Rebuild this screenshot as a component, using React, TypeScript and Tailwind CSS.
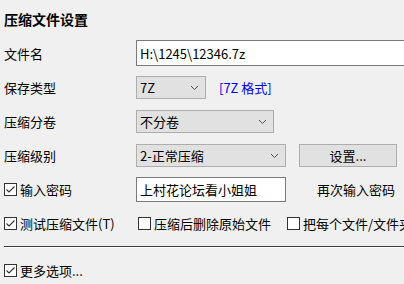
import type { ReactNode } from 'react'

function Chevron() {
  return (
    <svg width="9" height="6" viewBox="0 0 9 6" className="shrink-0">
      <path d="M1 1 L4.5 4.5 L8 1" fill="none" stroke="#505050" strokeWidth="1" />
    </svg>
  )
}

function Check({ checked }: { checked: boolean }) {
  return (
    <span className="w-[13px] h-[13px] shrink-0 border border-[#333] bg-white flex items-center justify-center">
      {checked && (
        <svg width="11" height="11" viewBox="0 0 11 11">
          <path d="M1.5 5.5 L4 8 L9.5 2.5" fill="none" stroke="#333" strokeWidth="1.1" />
        </svg>
      )}
    </span>
  )
}

function CheckLabel({ checked, children, className = '' }: { checked: boolean; children: ReactNode; className?: string }) {
  return (
    <label className={`flex items-center gap-[3px] whitespace-nowrap ${className}`}>
      <Check checked={checked} />
      <span>{children}</span>
    </label>
  )
}

function Select({ value, width }: { value: string; width: string }) {
  return (
    <div className={`h-full ${width} bg-[#e1e1e1] border border-[#adadad] flex items-center justify-between pl-[3px] pr-[6px]`}>
      <span>{value}</span>
      <Chevron />
    </div>
  )
}

function Row({ label, height, children }: { label: ReactNode; height: string; children: ReactNode }) {
  return (
    <div className={`flex items-center ${height}`}>
      <div className="w-[132px] shrink-0 flex items-center">{label}</div>
      {children}
    </div>
  )
}

export default function App() {
  return (
    <div className="w-[404px] h-[284px] overflow-hidden bg-[#f0f0f0] text-black text-[13px] leading-none font-['Noto_Sans_CJK_SC',sans-serif] pl-[4px]">
      <div className="h-[38px] flex items-center font-bold text-[14px]">压缩文件设置</div>

      <div className="mt-[2px]">
        <Row label="文件名" height="h-[26px]">
          <div className="h-full w-[300px] shrink-0 bg-white border border-[#7a7a7a] flex items-center pl-[3px]">
            H:\1245\12346.7z
          </div>
        </Row>
      </div>

      <div className="mt-[10px]">
        <Row label="保存类型" height="h-[23px]">
          <Select value="7Z" width="w-[70px]" />
          <span className="ml-[13px] text-[#0000ff]">[7Z 格式]</span>
        </Row>
      </div>

      <div className="mt-[11px]">
        <Row label="压缩分卷" height="h-[23px]">
          <Select value="不分卷" width="w-[138px]" />
        </Row>
      </div>

      <div className="mt-[11px]">
        <Row label="压缩级别" height="h-[23px]">
          <Select value="2-正常压缩" width="w-[150px]" />
          <div className="ml-[13px] h-full w-[98px] bg-[#e1e1e1] border border-[#adadad] flex items-center justify-center">
            设置...
          </div>
        </Row>
      </div>

      <div className="mt-[10px]">
        <Row label={<CheckLabel checked>输入密码</CheckLabel>} height="h-[25px]">
          <div className="h-full w-[150px] shrink-0 bg-white border border-[#7a7a7a] flex items-center pl-[3px]">
            上村花论坛看小姐姐
          </div>
          <span className="ml-[31px] whitespace-nowrap">再次输入密码</span>
        </Row>
      </div>

      <div className="mt-[13px] h-[16px] flex items-center">
        <CheckLabel checked className="w-[134px] shrink-0">测试压缩文件(T)</CheckLabel>
        <CheckLabel checked={false} className="w-[149px] shrink-0">压缩后删除原始文件</CheckLabel>
        <CheckLabel checked={false}>把每个文件/文件夹分别压缩</CheckLabel>
      </div>

      <div className="mt-[15px] border-t border-[#3c3c3c] border-b border-b-white" />

      <div className="mt-[14px] h-[16px] flex items-center">
        <CheckLabel checked>更多选项...</CheckLabel>
      </div>
    </div>
  )
}
